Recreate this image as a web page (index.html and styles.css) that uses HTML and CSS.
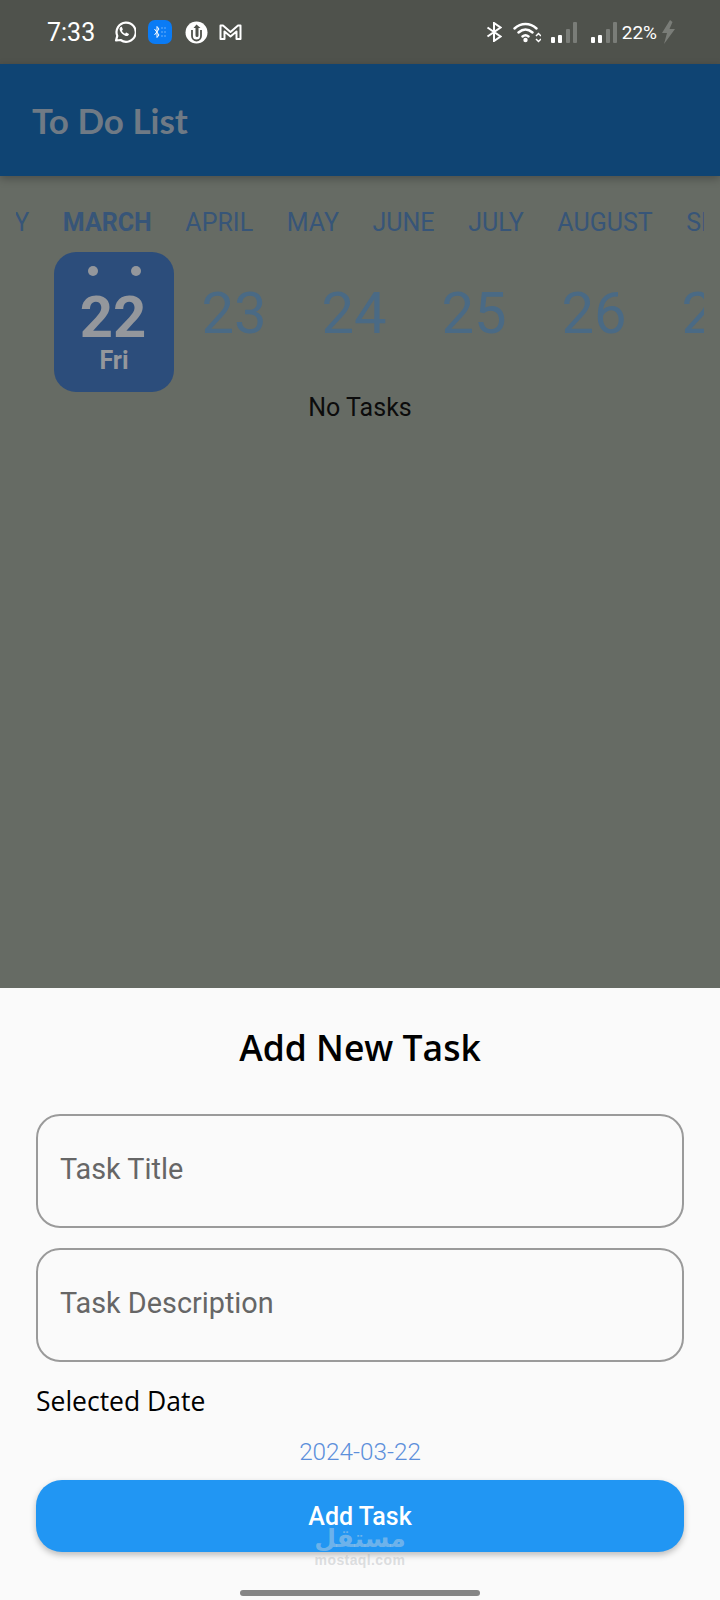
FILE: index.html
```html
<!DOCTYPE html>
<html lang="en">
<head>
  <meta charset="UTF-8" />
  <title>To Do List</title>
  <link rel="stylesheet" href="styles.css">
</head>
<body>
  <div class="status-bar">
    <div class="status-left">
      <span class="clock">7:33</span>
      <svg class="ic-wa" width="24" height="24" viewBox="0 0 24 24"><path d="M4 20.5l1.3-4.6A9.6 9.6 0 1 1 8.6 20z" fill="none" stroke="#fff" stroke-width="2.2" stroke-linejoin="round"/><path d="M8.7 6.9c-1.2.8-1.4 2.2-.8 3.7 1 2.4 3 4.3 5.3 5.2 1.5.5 2.900.2 3.600-1 .3-.5.200-.9-.2-1.100l-2-1c-.4-.2-.7-.100-.9.200l-.6.800c-1.400-.5-2.600-1.700-3.200-3l.7-.7c.200-.3.300-.6.100-.9l-.8-2c-.2-.4-.7-.5-1.200-.200z" fill="#fff"/></svg>
      <span class="bt-tile">
        <svg width="14" height="14" viewBox="0 0 14 14"><path d="M1.500 4l4.500 6-2 2.500V1.500l2 2.500-4.500 6" fill="none" stroke="#fff" stroke-width="1"/><path d="M8.500 3h1M11.500 3h1M8.500 7h1M11.500 7h1M8.500 11h1M11.500 11h1" stroke="#cfe4ff" stroke-width="1"/></svg>
      </span>
      <svg class="ic-up" width="23" height="23" viewBox="0 0 23 23"><circle cx="11.500" cy="11.500" r="11" fill="#fff"/><path d="M11.500 3.500l4 3.500h-2v7.500a1.500 1.500 0 0 1-3 0V7h-2z" fill="#4f524c"/><path d="M7 9v6a4.500 4.500 0 0 0 9 0V9" fill="none" stroke="#4f524c" stroke-width="1.800"/></svg>
      <svg class="ic-m" width="23" height="18" viewBox="0 0 23 18"><path d="M1.500 16V2.500h2.500l7.500 6.500 7.500-6.500h2.500V16h-4V8.500l-6 5-6-5V16z" fill="none" stroke="#fff" stroke-width="2" stroke-linejoin="round"/></svg>
    </div>
    <div class="status-right">
      <svg class="ic-bt" width="16" height="20" viewBox="0 0 16 20"><path d="M1.500 5.500l13 9-6.500 4.500V1l6.500 4.500-13 9" fill="none" stroke="#fff" stroke-width="2"/></svg>
      <svg class="ic-wifi" width="28" height="22" viewBox="0 0 28 22"><path d="M1.500 7.500C8 1.500 17 1.500 23.500 7.500M5.500 11.500c4.500-4 9.500-4 14 0M9.500 15.500c2-1.800 4-1.800 6 0" fill="none" stroke="#fff" stroke-width="2.400" stroke-linecap="round"/><circle cx="12.500" cy="19" r="2.200" fill="#fff"/><path d="M23 15l2.500-2.500 2.500 2.500M23 18l2.500 2.500 2.500-2.500" fill="none" stroke="#fff" stroke-width="1.500"/></svg>
      <svg class="ic-sig" width="26" height="21" viewBox="0 0 26 21"><rect x="0" y="15" width="4" height="6" rx="1" fill="#fff"/><rect x="7" y="13" width="4" height="8" rx="1" fill="#fff"/><rect x="15" y="7" width="4" height="14" rx="1" fill="#7a7d78"/><rect x="22" y="0" width="4" height="21" rx="1" fill="#7a7d78"/></svg>
      <svg class="ic-sig" width="26" height="21" viewBox="0 0 26 21"><rect x="0" y="15" width="4" height="6" rx="1" fill="#fff"/><rect x="7" y="13" width="4" height="8" rx="1" fill="#fff"/><rect x="15" y="7" width="4" height="14" rx="1" fill="#7a7d78"/><rect x="22" y="0" width="4" height="21" rx="1" fill="#7a7d78"/></svg>
      <span class="battery">22%</span>
      <svg class="ic-bolt" width="13" height="24" viewBox="0 0 13 24"><path d="M8 0L0 13h5l-3 11 11-15H7.500l3-7z" fill="#7a7d78"/></svg>
    </div>
  </div>

  <div class="app-bar">To Do List</div>

  <div class="main">
    <div class="months">
      <div class="months-strip">
        <span class="month">MAY</span>
        <span class="month active">MARCH</span>
        <span class="month">APRIL</span>
        <span class="month">MAY</span>
        <span class="month">JUNE</span>
        <span class="month">JULY</span>
        <span class="month">AUGUST</span>
        <span class="month">SEPTEMBER</span>
      </div>
    </div>
    <div class="days">
      <div class="day selected">
        <div class="dots"><i></i><i></i></div>
        <div class="day-num">22</div>
        <div class="day-name">Fri</div>
      </div>
      <div class="day"><div class="day-num">23</div></div>
      <div class="day"><div class="day-num">24</div></div>
      <div class="day"><div class="day-num">25</div></div>
      <div class="day"><div class="day-num">26</div></div>
      <div class="day"><div class="day-num">27</div></div>
    </div>
    <p class="no-tasks">No Tasks</p>
  </div>

  <div class="sheet">
    <h2 class="sheet-title">Add New Task</h2>
    <div class="field">Task Title</div>
    <div class="field">Task Description</div>
    <div class="label">Selected Date</div>
    <div class="date">2024-03-22</div>
    <button class="add-btn">Add Task</button>
    <div class="watermark">
      <span class="wm-ar" dir="rtl" lang="ar">مستقل</span>
      <span class="wm-en">mostaql.com</span>
    </div>
    <div class="home-bar"></div>
  </div>
</body>
</html>
```

FILE: styles.css
```css
* { box-sizing: border-box; }
body {
  margin: 0;
  width: 720px;
  height: 1600px;
  display: flex;
  flex-direction: column;
  overflow: hidden;
  background-color: #666b64;
  font-family: 'Roboto', sans-serif;
}
.status-bar {
  height: 64px;
  flex: none;
  background-color: #4f524c;
  color: #fff;
  display: flex;
  justify-content: space-between;
  align-items: center;
  padding: 0 45px 0 47px;
}
.status-left, .status-right {
  display: flex;
  align-items: center;
}
.status-left { gap: 10px; }
.clock {
  font-size: 25px;
  margin-right: 7px;
}
.ic-wa { margin-right: 2px; }
.ic-up { margin-left: 3px; }
.ic-m { margin-left: 1px; }
.bt-tile {
  width: 24px;
  height: 24px;
  border-radius: 7px;
  background-color: #0a7bf5;
  display: flex;
  align-items: center;
  justify-content: center;
}
.ic-bt { margin-right: 11px; }
.ic-wifi { margin-right: 10px; }
.ic-sig { margin-right: 14px; }
.ic-sig + .ic-sig { margin-right: 5px; }
.battery {
  font-size: 19px;
  margin-right: 5px;
}
.app-bar {
  height: 112px;
  flex: none;
  background-color: #0f4473;
  color: #6f7a85;
  font-family: 'Lato', sans-serif;
  font-weight: 700;
  font-size: 35px;
  display: flex;
  align-items: center;
  padding-left: 32px;
  box-shadow: 0 3px 8px rgba(0, 0, 0, 0.25);
  position: relative;
}
.main {
  flex: 1;
  padding: 0 16px;
}
.months {
  height: 76px;
  padding-top: 16px;
  overflow: hidden;
  display: flex;
  align-items: center;
}
.months-strip {
  display: flex;
  gap: 33.6px;
  margin-left: -39px;
  white-space: nowrap;
}
.month {
  font-size: 25px;
  color: #375578;
}
.month.active { font-weight: 700; }
.days {
  display: flex;
  overflow: hidden;
  padding-left: 38px;
  height: 140px;
}
.day {
  flex: 0 0 120px;
  height: 140px;
  text-align: center;
  color: #4a6a85;
}
.day-num {
  font-size: 58px;
  line-height: 68px;
  margin-top: 27px;
}
.day.selected {
  background-color: #2c4d7b;
  border-radius: 22px;
  color: #94979c;
}
.dots {
  display: flex;
  justify-content: center;
  gap: 33px;
  padding-top: 14px;
}
.dots i {
  width: 10px;
  height: 10px;
  border-radius: 50%;
  background-color: #94979c;
}
.selected .day-num {
  font-weight: 700;
  margin-top: 7px;
  margin-left: -2px;
}
.day-name {
  font-size: 25px;
  font-weight: 700;
  line-height: 28px;
  margin-top: -4px;
}
.no-tasks {
  margin: 1px 0 0;
  text-align: center;
  font-size: 25px;
  line-height: 30px;
  color: #0c0c0c;
}
.sheet {
  height: 612px;
  flex: none;
  background-color: #fafafa;
  padding: 36px 36px 0;
  position: relative;
}
.sheet-title {
  margin: 0 0 44px;
  text-align: center;
  font-family: 'Open Sans', sans-serif;
  font-weight: 600;
  font-size: 35.5px;
  line-height: 46px;
  color: #000;
}
.field {
  height: 114px;
  margin-bottom: 20px;
  border: 2px solid #9a9a9a;
  border-radius: 24px;
  padding: 35px 22px 0;
  font-size: 28.8px;
  line-height: 36px;
  color: #666;
}
.label {
  font-family: 'Open Sans', sans-serif;
  font-size: 26.5px;
  line-height: 34px;
  color: #000;
  padding-top: 2px;
  box-sizing: content-box;
}
.date {
  text-align: center;
  font-size: 24.3px;
  font-weight: 300;
  line-height: 28px;
  color: #5c8fdb;
  margin-top: 20px;
}
.add-btn {
  display: block;
  width: 100%;
  height: 72px;
  margin-top: 14px;
  border: none;
  border-radius: 26px;
  background-color: #2196f3;
  color: #fff;
  font-family: 'Roboto', sans-serif;
  font-size: 25px;
  font-weight: 500;
  box-shadow: 0 3px 6px rgba(0, 0, 0, 0.25);
}
.watermark {
  position: absolute;
  left: 0;
  right: 0;
  top: 538px;
  display: flex;
  flex-direction: column;
  align-items: center;
  color: rgba(205, 215, 225, 0.45);
}
.wm-ar {
  font-family: 'DejaVu Sans', sans-serif;
  font-weight: 700;
  font-size: 25px;
  line-height: 26px;
}
.wm-en {
  font-family: 'Liberation Sans', sans-serif;
  font-weight: 700;
  font-size: 14px;
  line-height: 16px;
  letter-spacing: 0.4px;
  color: rgba(170, 175, 180, 0.4);
}
.home-bar {
  position: absolute;
  left: 240px;
  bottom: 4px;
  width: 240px;
  height: 6px;
  border-radius: 3px;
  background-color: #858585;
}
```
